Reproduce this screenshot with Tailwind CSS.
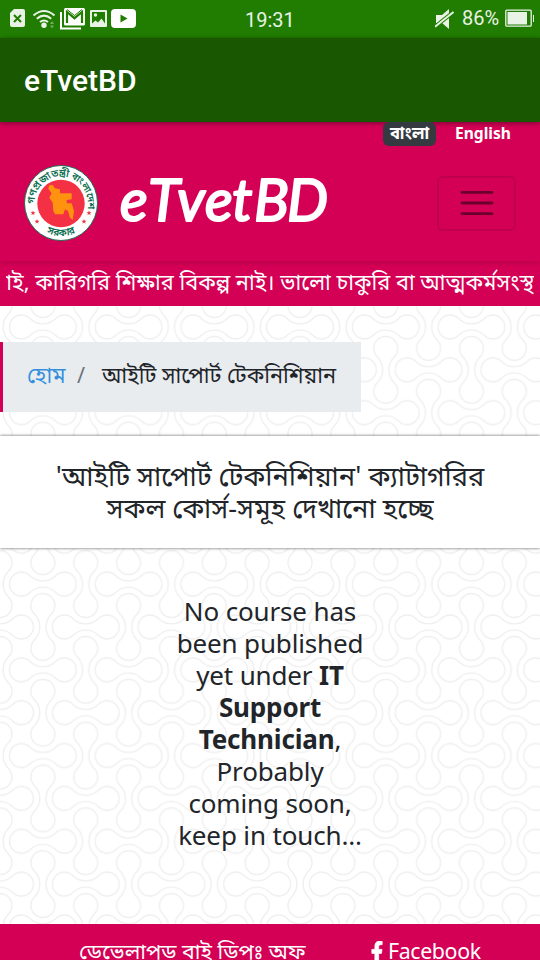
<!DOCTYPE html>
<html lang="bn">
<head>
<meta charset="utf-8">
<title>eTvetBD</title>
<script src="https://cdn.jsdelivr.net/npm/@tailwindcss/browser@4"></script>
</head>
<body class="w-[540px] h-[960px] overflow-hidden bg-white text-[#212529] font-['Noto_Sans','Noto_Sans_Bengali',sans-serif]">
<div class="relative isolate flex h-[960px] flex-col overflow-hidden">
  <svg class="absolute inset-0 -z-10" width="540" height="960">
    <defs>
      <path id="link" d="M-12.94-8.49A18.3 18.3 0 0 0 12.94-8.49A12 12 0 1 1 12.94 8.49A18.3 18.3 0 0 0-12.94 8.49A12 12 0 1 1-12.94-8.49Z" fill="none" stroke="#efefef" stroke-width="1.4"/>
      <pattern id="chain" width="85.72" height="85.72" patternUnits="userSpaceOnUse" y="284.1">
        <use href="#link" x="42.86" y="42.86"/>
        <use href="#link"/><use href="#link" x="85.72"/><use href="#link" y="85.72"/><use href="#link" x="85.72" y="85.72"/>
        <use href="#link" transform="translate(0 42.86) rotate(90)"/><use href="#link" transform="translate(85.72 42.86) rotate(90)"/>
        <use href="#link" transform="translate(42.86 0) rotate(90)"/><use href="#link" transform="translate(42.86 85.72) rotate(90)"/>
      </pattern>
    </defs>
    <rect width="540" height="960" fill="url(#chain)"/>
  </svg>

  <!-- status bar -->
  <div class="flex h-[38px] shrink-0 items-center bg-[#217d01] font-[Roboto] text-[20px] text-[#e8f2e5]">
    <svg width="140" height="38" viewBox="0 0 140 38">
      <path d="M14 9h9q2 0 2 2v14q0 2-2 2H12q-2 0-2-2V13z" fill="#e8f2e5"/>
      <path d="M14 15l7 7m0-7l-7 7" stroke="#217d01" stroke-width="2"/>
      <g fill="none" stroke="#e8f2e5" stroke-width="2.1"><path d="M33.500 15.500q10.500-9 21 0M36.800 18.700q7.200-6 14.400 0M40 22q4-3 8 0"/></g>
      <circle cx="44" cy="25.300" r="2.700" fill="#e8f2e5"/>
      <path d="M50 24l2-3 2 3zM50 25.500l2 3 2-3z" fill="#71ad5c"/>
      <path d="M61 12v16.500h20" fill="none" stroke="#fff" stroke-width="2"/>
      <rect x="64" y="8" width="21" height="17.500" rx="1.500" fill="#fff"/>
      <path d="M67 23V12l7.500 6.200L82 12v11" fill="none" stroke="#217d01" stroke-width="2.200"/>
      <path d="M67 9.500l7.500 6 7.500-6" fill="none" stroke="#217d01" stroke-width="1"/>
      <rect x="90" y="10" width="17" height="17" rx="1" fill="#e8f2e5"/>
      <path d="M92 12h13v11.500l-3.500-5-3.500 4-2.500-2-3.500 3z" fill="#217d01"/><circle cx="95.500" cy="15" r="1.700" fill="#e8f2e5"/>
      <rect x="111" y="9" width="25" height="19" rx="4" fill="#fff"/><path d="M120.500 14.500v8l7-4z" fill="#217d01"/>
    </svg>
    <span class="ml-[105px] w-[50px] pt-[1px] leading-none">19:31</span>
    <svg class="ml-[140px]" width="20" height="22" viewBox="0 0 20 22"><path d="M1 7h6l7-6v20l-7-6H1z" fill="#e8f2e5"/><path d="M0 18.800L18.500 4" stroke="#217d01" stroke-width="4"/><path d="M0 18.800L18.500 4" stroke="#e8f2e5" stroke-width="2"/></svg>
    <span class="-mt-[2px] ml-[7px] w-[43px] leading-none">86%</span>
    <svg class="-mt-[3px]" width="30" height="20" viewBox="0 0 30 20"><rect x=".8" y="2.200" width="25.400" height="16" rx="1" fill="none" stroke="#e8f2e5" stroke-width="1.300"/><rect x="2.500" y="4" width="19.500" height="12.500" fill="#e8f2e5"/><path d="M28.500 7v7" stroke="#e8f2e5"/></svg>
  </div>
  <div class="relative z-10 flex h-[84px] shrink-0 items-center bg-[#195801] pl-6 font-[Roboto] text-[30px] font-medium text-white shadow-[0_1px_5px_rgba(0,0,0,0.45)]"><span>eTvetBD</span></div>

  <!-- site header -->
  <header class="flex h-[139px] shrink-0 flex-col bg-[#d40055] shadow-[0_2px_5px_rgba(0,0,0,0.13)]">
    <div class="relative z-20 flex h-6 justify-end pr-[29px] text-[16.5px] leading-[22px] font-bold text-white">
      <span class="flex h-6 w-[53px] items-center justify-center rounded-md bg-[#343a40] pb-[2px] whitespace-nowrap">বাংলা</span>
      <span class="ml-[19px] w-[56px] whitespace-nowrap"><svg class="block" width="60" height="24"><text y="17" textLength="56" lengthAdjust="spacingAndGlyphs" fill="#fff" font-size="16.5">English</text></svg></span>
    </div>
    <div class="flex items-center px-6 pt-[19px]">
      <svg width="74" height="76" viewBox="0 0 74 76">
        <defs><path id="top" d="M10.500 40v-2a26.500 26.500 0 0 1 53 0v12"/><path id="bottom" d="M4 38a33 33 0 0 0 66 0"/></defs>
        <ellipse cx="37" cy="38" rx="36.500" ry="37.500" fill="#fff" stroke="#236b51"/>
        <circle cx="37" cy="38.500" r="23.700" fill="#f43044"/>
        <path d="M28.700 20l2.300 3.300 5 1v4h11.700v6l-5 .7v3.300h5l2.300 7.700-1.300 9-2.700-2.300-2-6.700-3-1.700-1.700 5H31l-1.700-3.300-.6-8.300-3.400-5 2.400-4.400-3.400-4.600 1-3.400z" fill="#ff930f"/>
        <g fill="#086c4e" font-size="10.200" font-weight="600"><text><textPath href="#top" startOffset="1">গণপ্রজাতন্ত্রী</textPath></text><text><textPath href="#top" startOffset="53" font-size="9.500">বাংলাদেশ</textPath></text><text text-anchor="middle"><textPath href="#bottom" startOffset="50%">সরকার</textPath></text></g>
        <g fill="#e9303b"><path id="star" d="M0-2.500l.7 1.700H2.500L1 .4l.6 1.800L0 1.100l-1.600 1.100L-1 .4l-1.500-1.200H-.7z" transform="translate(9 48)"/><use href="#star" x="4" y="8.500"/><use href="#star" x="56"/><use href="#star" x="51" y="8.500"/></g>
      </svg>
      <svg class="ml-5 overflow-visible" width="210" height="66"><text x="2 30 59 87 114 136 169" y="51" font-family="Lato" font-style="italic" font-size="58" fill="#fff" stroke="#fff" stroke-width="2" stroke-linejoin="round">eTvetBD</text></svg>
      <div class="ml-auto flex h-[55px] w-[79px] items-center justify-center rounded-md border-2 border-[#bf004d]">
        <svg width="34" height="28" viewBox="0 0 34 28"><path d="M2 3.300h30M2 14h30M2 24.700h30" stroke="#6a002b" stroke-width="2.800" stroke-linecap="round"/></svg>
      </div>
    </div>
  </header>
  <div class="relative -z-[1] h-[45px] shrink-0 bg-[#d40055]">
    <svg class="ml-[6px] block" width="528" height="45"><text x="528" y="29" text-anchor="end" font-size="21.75" fill="#fff">নাই, কারিগরি শিক্ষার বিকল্প নাই। ভালো চাকুরি বা আত্মকর্মসংস্থ</text></svg>
  </div>

  <nav class="mt-9 flex h-[70px] w-[361px] shrink-0 items-center border-l-[3px] border-[#d40055] bg-[#e9ecef] pb-[3px] pl-6 text-[21.7px] whitespace-nowrap">
    <span class="w-[38px] text-[#3490dc]">হোম</span><span class="ml-3 w-[25px] text-[#6c757d]">/</span><span>আইটি সাপোর্ট টেকনিশিয়ান</span>
  </nav>
  <h1 class="mt-6 flex h-[112px] shrink-0 flex-col items-center justify-center bg-white text-[27.2px] leading-8 shadow-[0_0_3px_rgba(0,0,0,0.65)] whitespace-nowrap"><span>'আইটি সাপোর্ট টেকনিশিয়ান' ক্যাটাগরির</span><span>সকল কোর্স-সমূহ দেখানো হচ্ছে</span></h1>
  <p class="mt-[47px] h-[329px] shrink-0 text-center text-[26px] leading-8 tracking-[-0.15px]">No course has<br>been published<br>yet under <b>IT</b><br><b>Support</b><br><b>Technician</b>,<br>Probably<br>coming soon,<br>keep in touch...</p>

  <footer class="flex h-[80px] shrink-0 bg-[#d40055] pt-[11px] text-[21.4px] leading-8 whitespace-nowrap text-white">
    <span class="ml-[79px] w-[292px]">ডেভেলাপড বাই ডিপঃ অফ</span>
    <svg class="mt-[6px] mr-[5px]" width="12" height="22" viewBox="0 0 320 512" preserveAspectRatio="none"><path fill="#fff" stroke="#fff" stroke-width="20" d="M279 288l14-93h-89v-60c0-25 12-50 52-50h41V7S260 0 225 0c-73 0-121 44-121 125v70H23v93h81v224h100V288z"/></svg>
    <span class="tracking-[-0.4px]">Facebook</span>
  </footer>
</div>
</body>
</html>
